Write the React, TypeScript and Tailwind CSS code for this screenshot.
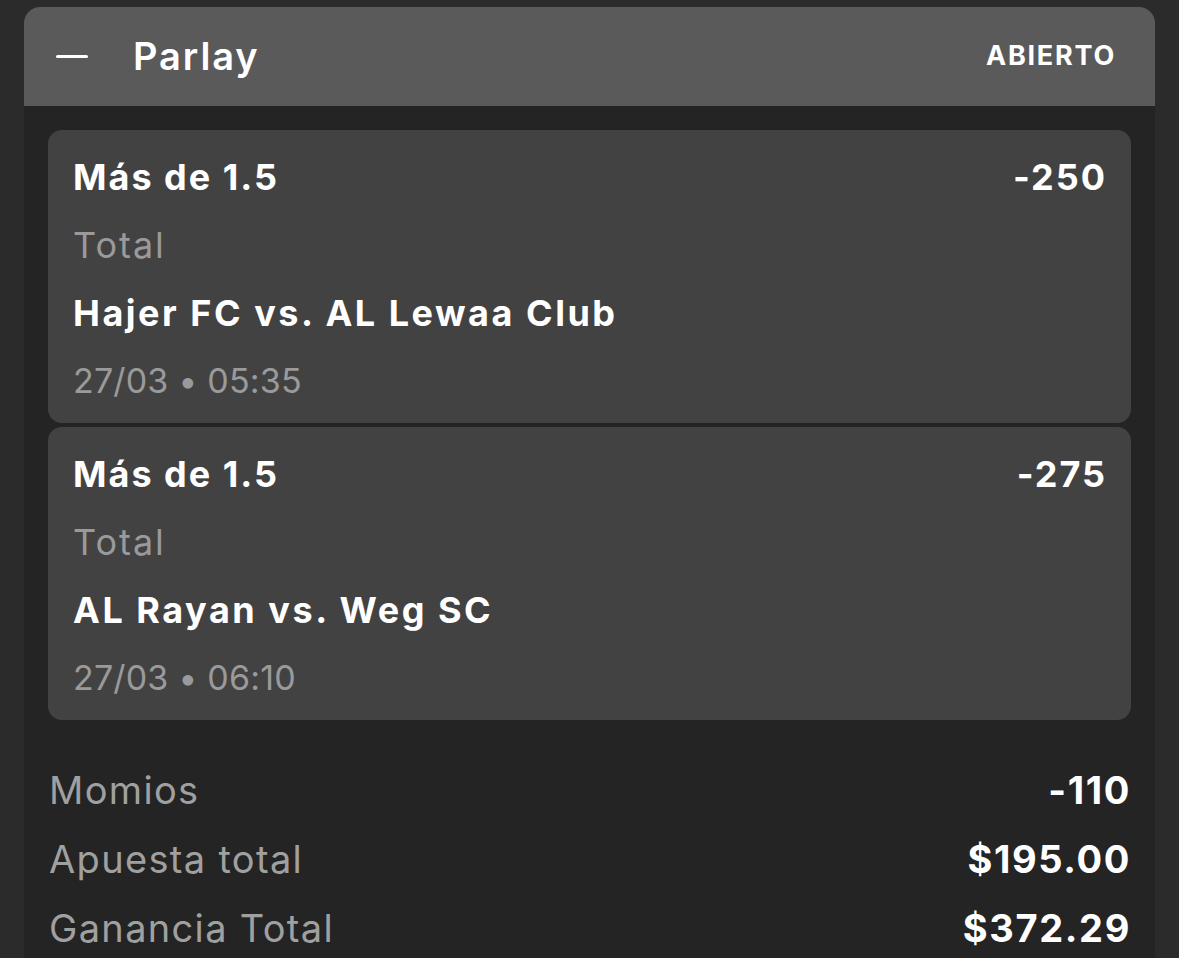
import React from "react";

const font = { fontFamily: "Inter, 'Noto Sans', sans-serif" };

function Leg({ odds, match, date }: { odds: string; match: string; date: string }) {
  return (
    <div className="rounded-[14px] bg-[#434243] pl-[25px] pr-[26px] pt-[13px] pb-[8px]">
      <div className="flex items-center justify-between h-[68px] text-[36px] font-bold text-white leading-[68px] tracking-[0.055em]">
        <span>Más de 1.5</span>
        <span className="-mr-[2px]">{odds}</span>
      </div>
      <div className="h-[68px] text-[36px] leading-[68px] text-[#9a9a9a] tracking-[0.055em]">Total</div>
      <div className="h-[68px] text-[36px] leading-[68px] font-bold text-white tracking-[0.07em]">{match}</div>
      <div className="h-[68px] text-[34px] leading-[68px] text-[#9a9a9a] tracking-[0.005em]">{date}</div>
    </div>
  );
}

function Row({ label, value }: { label: string; value: string }) {
  return (
    <div className="flex items-center justify-between h-[69px] leading-[69px]">
      <span className="text-[38px] text-[#a0a0a0] tracking-[0.035em]">{label}</span>
      <span className="-mr-[2px] text-[38px] font-bold text-white tracking-[0.043em]">{value}</span>
    </div>
  );
}

export default function App() {
  return (
    <div className="w-[1179px] h-[958px] overflow-hidden bg-[#2b2b2b] pt-[7px] px-[24px]" style={font}>
      <div className="rounded-t-[16px] overflow-hidden bg-[#242424] h-[1000px]">
        <div className="h-[99px] bg-[#5a5a5a] flex items-center pl-[32px] pr-[40px]">
          <div className="w-[32px] h-[3px] rounded-full bg-white" />
          <span className="ml-[45px] text-[38px] font-semibold text-white tracking-[0.05em]">Parlay</span>
          <span className="ml-auto -mr-[1px] text-[27px] font-bold text-white tracking-[0.065em]">ABIERTO</span>
        </div>
        <div className="px-[24px] pt-[24px]">
          <div className="flex flex-col gap-[4px]">
            <Leg odds="-250" match="Hajer FC vs. AL Lewaa Club" date="27/03 • 05:35" />
            <Leg odds="-275" match="AL Rayan vs. Weg SC" date="27/03 • 06:10" />
          </div>
          <div className="mt-[36px] pl-[1px] pr-[2px]">
            <Row label="Momios" value="-110" />
            <Row label="Apuesta total" value="$195.00" />
            <Row label="Ganancia Total" value="$372.29" />
          </div>
        </div>
      </div>
    </div>
  );
}
